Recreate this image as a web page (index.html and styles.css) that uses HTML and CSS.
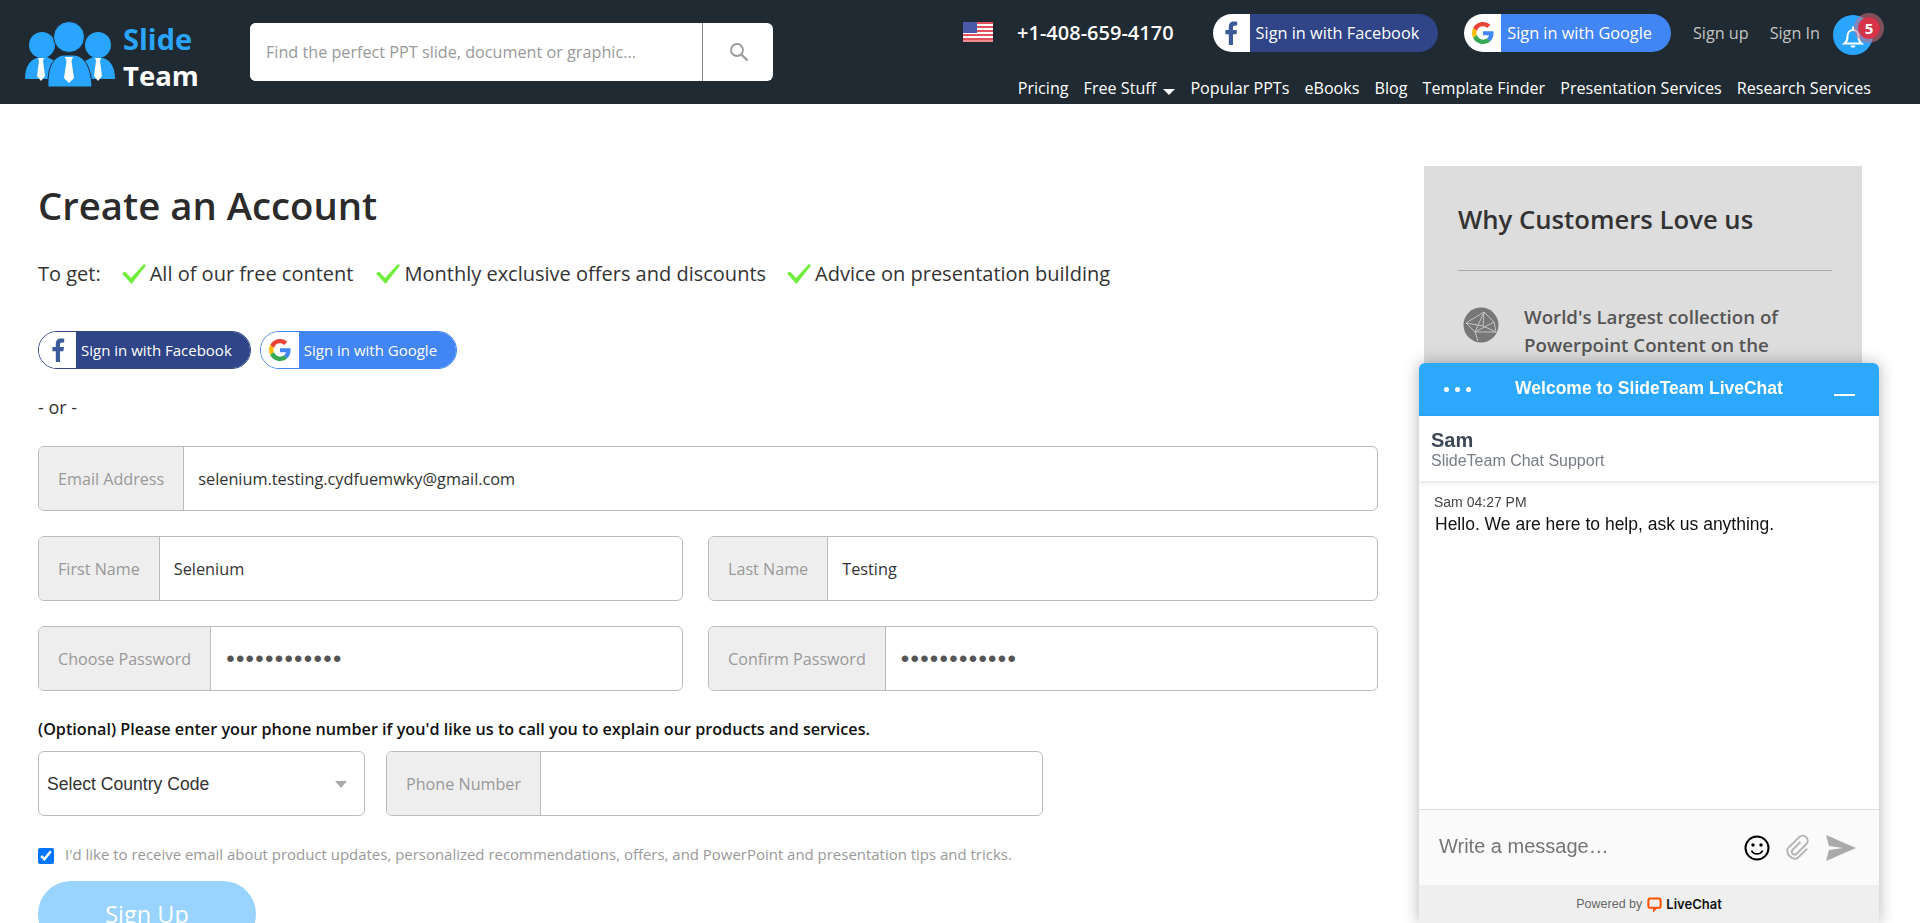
FILE: index.html
```html
<!DOCTYPE html>
<html lang="en">
<head>
    <meta charset="UTF-8" />
    <meta name="viewport" content="width=device-width, initial-scale=1.0" />
    <title>Create an Account - SlideTeam</title>
    <link rel="stylesheet" href="styles.css">
</head>
<body>

<svg class="defs" width="0" height="0">
    <symbol id="fb" viewBox="0 0 24 24">
        <path fill="#3b5a9a" d="M14 24V13.2h3.4l.6-4.200h-4V6.400c0-1.200.4-2 2.100-2H18.200V.7C17.800.6 16.500.5 15 .5c-3.100 0-5.200 1.900-5.200 5.300V9H6.400v4.200h3.400V24z"/>
    </symbol>
    <symbol id="google" viewBox="0 0 48 48">
        <path fill="#EA4335" d="M24 9.500c3.500 0 6.700 1.200 9.200 3.600l6.900-6.900C35.900 2.400 30.500 0 24 0 14.600 0 6.500 5.400 2.600 13.200l8 6.200C12.400 13.700 17.700 9.500 24 9.500z"/>
        <path fill="#4285F4" d="M47 24.500c0-1.600-.1-3.100-.4-4.500H24v9h12.900c-.6 3-2.200 5.500-4.800 7.200l7.700 6C44.400 37.900 47 31.800 47 24.500z"/>
        <path fill="#FBBC05" d="M10.500 28.600c-.5-1.500-.8-3-.8-4.600s.3-3.100.8-4.600l-8-6.200C.9 16.500 0 20.100 0 24s.9 7.500 2.600 10.800z"/>
        <path fill="#34A853" d="M24 48c6.500 0 11.900-2.100 15.900-5.800l-7.700-6c-2.100 1.400-4.900 2.300-8.100 2.300-6.300 0-11.600-4.200-13.500-9.900l-8 6.200C6.500 42.600 14.600 48 24 48z"/>
    </symbol>
    <symbol id="tick" viewBox="0 0 24 20">
        <path fill="#6fee3c" d="M0 9.500 3 7.500 9 14 22 0 24 1.500 9.500 20z"/>
    </symbol>
</svg>

<header class="topbar">
    <a class="logo" href="#">
        <svg class="logo-mark" viewBox="0 0 90 66" width="90" height="66">
            <g fill="#29a5ff">
                <circle cx="17" cy="24" r="13"/>
                <circle cx="73" cy="24" r="13"/>
                <path d="M0 58C0 44 6 37 16 36h6l8 4v18z"/>
                <path d="M90 58C90 44 84 37 74 36h-6l-8 4v18z"/>
                <circle cx="44" cy="16" r="15.500" stroke="#1f2a32" stroke-width="1"/>
                <path d="M23 66C22 44 30 34 40 34h8c10 0 18 10 19 32z" stroke="#1f2a32" stroke-width="1"/>
            </g>
            <g fill="#fff">
                <path d="M40 36h8l-1.500 4 2.500 17-5 5-5-5 2.500-17z"/>
                <path d="M13 37h6l-1 3 2 15-4 5-4-5 2-15z"/>
                <path d="M70 37h6l-1 3 2 15-4 5-4-5 2-15z"/>
            </g>
        </svg>
        <span class="logo-text"><span class="logo-slide">Slide</span><span class="logo-team">Team</span></span>
    </a>

    <form class="search">
        <input class="search-input" type="text" placeholder="Find the perfect PPT slide, document or graphic...">
        <span class="search-btn">
            <svg viewBox="0 0 20 20" width="20" height="20"><circle cx="8" cy="8" r="6" fill="none" stroke="#999" stroke-width="1.800"/><path d="M12.500 12.500 18.500 18.500" stroke="#999" stroke-width="2.200"/></svg>
        </span>
    </form>

    <div class="top-right">
        <div class="top-row">
            <svg class="flag" viewBox="0 0 30 20" width="30" height="20">
                <rect width="30" height="20" fill="#fff"/>
                <path fill="#e2525c" d="M0 0h30v2H0zM0 4h30v2H0zM0 8h30v2H0zM0 12h30v2H0zM0 16h30v2H0z"/>
                <path fill="#f28b90" d="M0 18h30v2H0z"/>
                <rect width="14" height="11" fill="#4a5aa8"/>
            </svg>
            <span class="phone">+1-408-659-4170</span>
            <a class="social social-fb top-social" href="#"><span class="social-ico"><svg width="24" height="24"><use href="#fb"/></svg></span><span class="social-label">Sign in with Facebook</span></a>
            <a class="social social-g top-social" href="#"><span class="social-ico"><svg width="22" height="22"><use href="#google"/></svg></span><span class="social-label">Sign in with Google</span></a>
            <a class="top-link" href="#">Sign up</a>
            <a class="top-link" href="#">Sign In</a>
            <span class="bell">
                <svg viewBox="0 0 24 24" width="24" height="24"><path fill="none" stroke="#fff" stroke-width="2" d="M3.500 18.500c2-1.500 3-3.500 3-7 0-3.800 2.200-6.500 5.500-6.500s5.500 2.700 5.500 6.500c0 3.500 1 5.500 3 7z"/><path fill="#fff" d="M11 1.500h2V5h-2zM9.500 20.500h5c-.3 3-4.700 3-5 0z"/></svg>
                <span class="bell-count">5</span>
            </span>
        </div>
        <nav class="nav">
            <a href="#">Pricing</a>
            <a href="#">Free Stuff <i class="caret"></i></a>
            <a href="#">Popular PPTs</a>
            <a href="#">eBooks</a>
            <a href="#">Blog</a>
            <a href="#">Template Finder</a>
            <a href="#">Presentation Services</a>
            <a href="#">Research Services</a>
        </nav>
    </div>
</header>

<main class="page">
    <section class="signup">
        <h1>Create an Account</h1>
        <div class="perks">
            <span class="perks-lead">To get:</span>
            <span class="perk"><svg width="24" height="20"><use href="#tick"/></svg>All of our free content</span>
            <span class="perk"><svg width="24" height="20"><use href="#tick"/></svg>Monthly exclusive offers and discounts</span>
            <span class="perk perk-last"><svg width="24" height="20"><use href="#tick"/></svg>Advice on presentation building</span>
        </div>

        <div class="social-row">
            <a class="social social-fb" href="#"><span class="social-ico"><svg width="24" height="24"><use href="#fb"/></svg></span><span class="social-label">Sign in with Facebook</span></a>
            <a class="social social-g" href="#"><span class="social-ico"><svg width="22" height="22"><use href="#google"/></svg></span><span class="social-label">Sign in with Google</span></a>
        </div>

        <p class="or">- or -</p>

        <div class="form-row">
            <label class="field"><span class="addon">Email Address</span><input type="text" value="selenium.testing.cydfuemwky@gmail.com"></label>
        </div>
        <div class="form-row split">
            <label class="field"><span class="addon">First Name</span><input type="text" value="Selenium"></label>
            <label class="field"><span class="addon">Last Name</span><input type="text" value="Testing"></label>
        </div>
        <div class="form-row split">
            <label class="field"><span class="addon">Choose Password</span><input class="pass" type="password" value="selenium1234"></label>
            <label class="field"><span class="addon">Confirm Password</span><input class="pass" type="password" value="selenium1234"></label>
        </div>

        <p class="optional">(Optional) Please enter your phone number if you'd like us to call you to explain our products and services.</p>

        <div class="phone-row">
            <div class="select-wrap">
                <select><option>Select Country Code</option></select>
            </div>
            <label class="field phone-field"><span class="addon">Phone Number</span><input type="text"></label>
        </div>

        <label class="consent"><input type="checkbox" checked>I'd like to receive email about product updates, personalized recommendations, offers, and PowerPoint and presentation tips and tricks.</label>

        <button class="submit" type="button">Sign Up</button>
    </section>

    <aside class="why">
        <h2>Why Customers Love us</h2>
        <div class="why-item">
            <svg class="why-ico" viewBox="0 0 36 36" width="36" height="36">
                <circle cx="18" cy="18" r="17.500" fill="#777"/>
                <path fill="none" stroke="#c4c4c4" stroke-width="1" d="M3 16 21 5 31 15 12 25 3 16M21 5 12 25 15 34M31 15 33 25 12 25M21 5 20 19 33 25M3 16 20 19"/>
            </svg>
            <p>World's Largest collection of Powerpoint Content on the Internet</p>
        </div>
    </aside>
</main>

<div class="chat">
    <div class="chat-head">
        <span class="chat-dots"><i></i><i></i><i></i></span>
        <span class="chat-title">Welcome to SlideTeam LiveChat</span>
        <span class="chat-min"></span>
    </div>
    <div class="chat-agent">
        <strong>Sam</strong>
        <span>SlideTeam Chat Support</span>
    </div>
    <div class="chat-log">
        <div class="msg-meta">Sam 04:27 PM</div>
        <div class="msg-text">Hello. We are here to help, ask us anything.</div>
    </div>
    <div class="chat-compose">
        <span class="compose-text">Write a message…</span>
        <svg viewBox="0 0 26 26" width="26" height="26"><circle cx="13" cy="13" r="11.500" fill="none" stroke="#000" stroke-width="2"/><circle cx="9" cy="10" r="1.700"/><circle cx="17" cy="10" r="1.700"/><path d="M7.500 15.500c2 4.500 9 4.500 11 0" fill="none" stroke="#000" stroke-width="1.800"/></svg>
        <svg viewBox="0 0 28 28" width="28" height="28"><path transform="rotate(45 14 14)" d="M11.500 8V19a2.800 2.800 0 0 0 5.600 0V5.500a5 5 0 0 0-10 0V21" fill="none" stroke="#b5b5b5" stroke-width="2"/><path transform="rotate(45 14 14)" d="M7.100 21a6.900 4.600 0 0 0 13.800 0V8" fill="none" stroke="#b5b5b5" stroke-width="2"/></svg>
        <svg viewBox="0 0 30 26" width="30" height="26"><path fill="#aaa" d="M0 0 30 13 0 26 3 15 17 13 3 11z"/></svg>
    </div>
    <div class="chat-foot">
        <span class="powered">Powered by</span>
        <svg viewBox="0 0 16 16" width="15" height="15"><path fill="none" stroke="#ff5100" stroke-width="2.200" d="M3.500 1.500h9c1.200 0 2 .8 2 2v6c0 1.200-.8 2-2 2h-2.500l-2.500 2.500v-2.500h-4c-1.200 0-2-.8-2-2v-6c0-1.200.8-2 2-2z"/></svg>
        <span class="lc-name">LiveChat</span>
    </div>
</div>

</body>
</html>
```

FILE: styles.css
```css
*{ box-sizing:border-box; }
html,body{ height:100%; overflow:hidden; }
body{ margin:0; font-family:"Open Sans", sans-serif; color:#333; background:#fff; }
a{ text-decoration:none; color:inherit; }
.defs{ display:block; height:0; }

/* top bar */
.topbar{ display:flex; height:104px; background:#1f2a32; padding:0 49px 0 25px; }
.logo{ display:flex; align-items:flex-start; gap:8px; width:225px; padding-top:21px; }
.logo-mark{ display:block; }
.logo-text{ display:flex; flex-direction:column; font-weight:700; font-size:29px; line-height:37px; margin-top:-1px; }
.logo-slide{ color:#29a5ff; }
.logo-team{ color:#fff; font-size:27.500px; }

.search{ display:flex; width:523px; height:58px; margin-top:23px; background:#fff; border-radius:6px; overflow:hidden; }
.search-input{ flex:1; min-width:0; border:0; outline:0; padding:0 16px; font:16.200px "Open Sans", sans-serif; color:#333; }
.search-input::placeholder{ color:#999; opacity:1; }
.search-btn{ display:flex; align-items:center; justify-content:center; width:71px; padding-left:2px; border-left:1px solid #888; }

.top-right{ margin-left:auto; display:flex; flex-direction:column; align-items:flex-end; }
.top-row{ display:flex; align-items:center; height:70px; padding-bottom:5px; margin-right:-2px; color:#fff; }
.flag{ margin-right:24px; margin-bottom:1px; }
.phone{ font-size:20px; font-weight:600; margin-right:39px; }
.top-link{ color:#c4c4c4; font-size:16.200px; margin-left:21px; }
.top-social + .top-link{ margin-left:22px; }
.top-social + .top-social{ margin-left:26px; }
.bell{ position:relative; display:flex; align-items:center; justify-content:center; width:40px; height:40px; margin:4px 0 0 13px; background:#29a5ff; border-radius:50%; }
.bell svg{ margin-top:4px; }
.bell-count{ position:absolute; top:-2px; right:-11px; width:30px; height:30px; line-height:22px; text-align:center; border-radius:50%; background:#d7334a; background-clip:padding-box; border:4px solid rgba(205,110,125,.55); font-size:15px; font-weight:700; }
.nav{ display:flex; gap:15px; font-size:16.150px; color:#fff; line-height:22px; margin-top:7px; }
.caret{ display:inline-block; margin-left:3px; vertical-align:-1px; border:6px solid transparent; border-top:6px solid #fff; border-bottom:0; }

/* social buttons */
.social{ display:inline-flex; height:38px; border-radius:19px; overflow:hidden; color:#fff; font-size:15px; }
.social-ico{ display:flex; align-items:center; justify-content:center; flex:none; background:#fff; width:37px; }
.social-label{ display:flex; align-items:center; padding:0 18px 0 5px; }
.social-fb .social-label{ background:#2f4587; }
.social-g .social-label{ background:#4285f4; }
.top-social{ font-size:16.300px; }
.top-social .social-label{ padding:0 19px 0 6px; }

/* page */
.page{ display:flex; justify-content:space-between; padding:0 58px 0 38px; }
.signup{ width:1340px; }
h1{ margin:0; padding-top:75px; font-size:38.300px; font-weight:600; line-height:52px; color:#2b2b2b; }
.perks{ display:flex; align-items:center; margin-top:29px; font-size:20px; line-height:28px; color:#333; }
.perks-lead{ margin-right:21px; }
.perk{ display:flex; align-items:center; margin-right:23px; }
.perk svg{ margin-right:4px; }
.perk-last{ margin-left:-2px; }
.social-row{ display:flex; gap:9px; margin-top:43px; }
.social-row .social{ border:1px solid #2f4587; }
.social-row .social-g{ border-color:#4285f4; }
.social-row .social-g .social-ico{ width:38px; }
.social-row .social-g .social-label{ padding-right:19px; }
.or{ margin:26px 0 0; font-size:18px; line-height:24px; }

.form-row{ display:flex; gap:25px; margin-bottom:25px; }
.or + .form-row{ margin-top:27px; }
.split .field:first-child{ flex:none; width:645px; }
.field{ flex:1; display:flex; height:65px; border:1px solid #bbb; border-radius:6px; overflow:hidden; background:#fff; }
.addon{ display:flex; align-items:center; padding:0 19px; background:#eee; border-right:1px solid #bbb; color:#999; font-size:16.150px; white-space:nowrap; }
.field input{ flex:1; min-width:0; border:0; outline:0; padding:0 14px; font:16.300px "Open Sans", sans-serif; color:#333; background:transparent; }
.field .pass{ font-family:"Liberation Sans", sans-serif; font-size:24px; letter-spacing:1.300px; color:#555; padding-left:15px; }
.optional{ margin:27px 0 0; font-size:16.200px; font-weight:600; line-height:22px; color:#111; }
.phone-row{ display:flex; gap:21px; margin-top:11px; }
.select-wrap{ position:relative; width:327px; }
.select-wrap::after{ content:""; position:absolute; right:18px; top:30px; border:6.500px solid transparent; border-top:7px solid #aaa; border-bottom:0; }
.select-wrap select{ width:100%; height:65px; padding:0 8px; appearance:none; border:1px solid #bbb; border-radius:6px; background:#fff; font:17.600px "Liberation Sans", sans-serif; color:#333; }
.phone-field{ flex:none; width:657px; }
.consent{ display:flex; align-items:center; margin-top:27px; font-size:14.960px; line-height:22px; color:#999; }
.consent input{ width:16px; height:16px; margin:4px 11px 0 0; accent-color:#0075ff; }
.submit{ display:block; width:218px; height:66px; margin-top:16px; border:0; border-radius:33px; background:#99d3ff; color:#fff; font:23.500px "Open Sans", sans-serif; }

/* why us */
.why{ width:438px; height:520px; margin-top:62px; padding:33px 30px 0 34px; background:#ddd; }
.why h2{ margin:0; padding-bottom:29px; border-bottom:1px solid #aaa; font-size:25.700px; font-weight:600; line-height:42px; color:#333; }
.why-item{ display:flex; margin-top:32px; padding-left:5px; }
.why-ico{ flex:none; margin:4px 25px 0 0; }
.why-item p{ margin:0; font-size:18.700px; font-weight:600; line-height:28px; color:#555; }

/* chat window */
.chat{ position:fixed; right:41px; bottom:0; width:460px; height:560px; display:flex; flex-direction:column; background:#fff; border-radius:6px 6px 0 0; box-shadow:0 0 16px rgba(0,0,0,.3); font-family:"Liberation Sans", sans-serif; overflow:hidden; }
.chat-head{ display:flex; align-items:center; justify-content:space-between; flex:none; height:53px; padding:0 24px 2px 25px; background:#2ca8ff; color:#fff; }
.chat-dots{ display:flex; gap:6px; padding-top:1px; }
.chat-dots i{ width:5px; height:5px; border-radius:50%; background:#fff; }
.chat-title{ font-size:17.500px; font-weight:700; margin-right:7px; }
.chat-min{ width:21px; height:2px; margin-top:12px; background:#fff; }
.chat-agent{ flex:none; display:flex; flex-direction:column; height:65px; padding:12px 12px 0; box-shadow:0 1px 5px rgba(0,0,0,.15); }
.chat-agent strong{ font-size:20px; line-height:24px; color:#3d4856; }
.chat-agent span{ font-size:16px; line-height:18px; color:#777d85; }
.chat-log{ flex:1; padding:13px 15px 0; }
.msg-meta{ font-size:14px; line-height:16px; color:#444; }
.msg-text{ margin-top:2px; font-size:17.500px; line-height:24px; color:#111; padding-left:1px; }
.chat-compose{ flex:none; display:flex; align-items:center; gap:14px; height:76px; padding:0 23px 0 20px; border-top:1px solid #ddd; background:#fafafa; }
.compose-text{ flex:1; font-size:20px; color:#757575; margin-top:-2px; }
.chat-foot{ flex:none; display:flex; align-items:center; justify-content:center; gap:5px; height:38px; background:#efefef; }
.powered{ font-size:12.500px; color:#666; }
.lc-name{ font-family:Inter, sans-serif; font-size:13px; font-weight:600; color:#111; margin-left:-1px; }
```
